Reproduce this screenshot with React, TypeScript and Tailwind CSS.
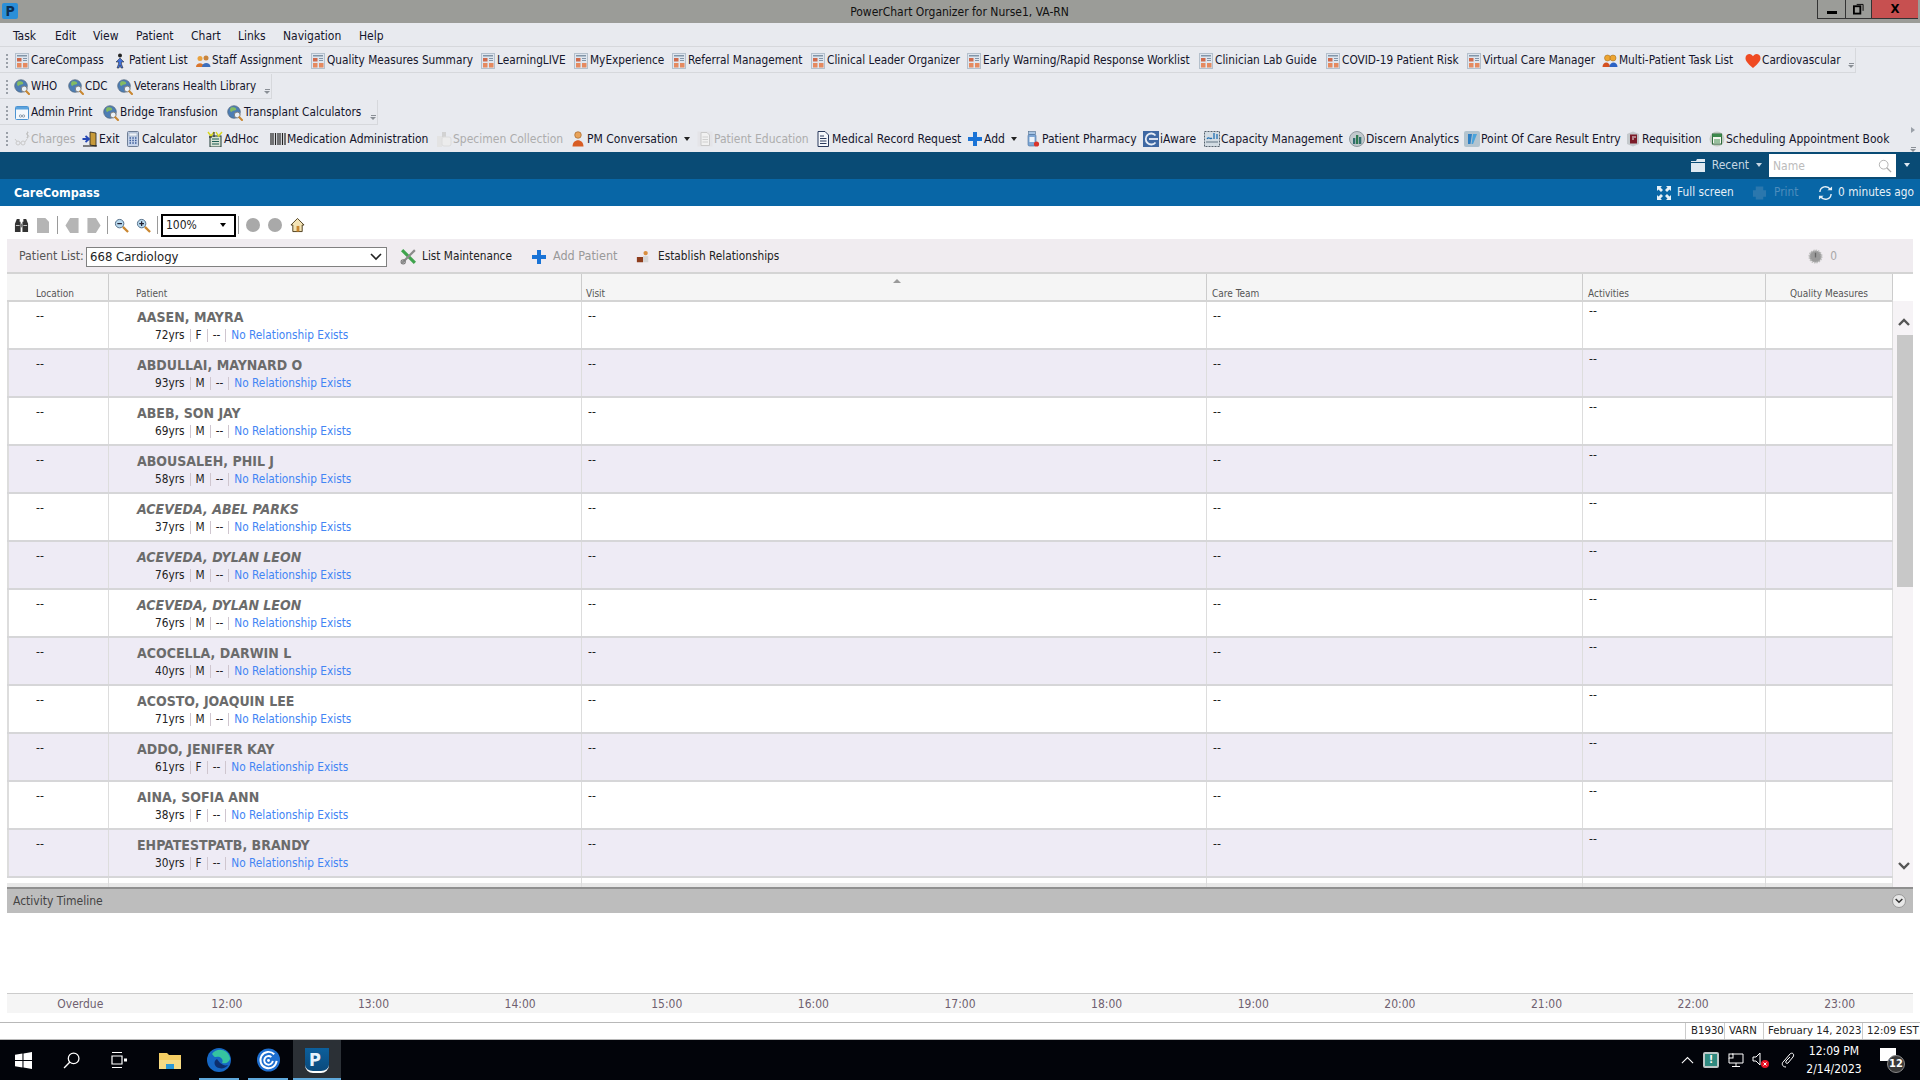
import type { ReactNode } from "react";

const Svg = ({ children, className = "w-4 h-4" }: { children: ReactNode; className?: string }) => (
  <svg viewBox="0 0 16 16" className={`flex-none ${className}`}>
    {children}
  </svg>
);

const icons: Record<string, ReactNode> = {
  report: (
    <Svg>
      <rect x="1.5" y="0.5" width="13" height="15" fill="#dfe6ef" stroke="#b4c0cc" />
      <rect x="3" y="2" width="10" height="1.5" fill="#8295a8" />
      <rect x="3" y="5" width="4.5" height="3.5" fill="#cf6a4c" />
      <rect x="9" y="5" width="4" height="1" fill="#8295a8" />
      <rect x="9" y="7" width="4" height="1" fill="#8295a8" />
      <rect x="3" y="10" width="4.5" height="4.5" fill="#e58a60" />
      <rect x="9" y="10" width="4.5" height="4.5" fill="#e58a60" />
    </Svg>
  ),
  person: (
    <Svg>
      <circle cx="8" cy="2.5" r="2" fill="#222" />
      <path d="M8 5 L12 9 L9.5 9 L9.5 11 L11 15 H9 L8 12 L7 15 H5 L6.5 11 V9 H4 Z" fill="#3f6fd8" stroke="#222" strokeWidth="0.5" />
    </Svg>
  ),
  staff: (
    <Svg>
      <circle cx="5" cy="5.5" r="2.5" fill="#e9a23f" />
      <path d="M1 14 C1 9 9 9 9 14 Z" fill="#d9752d" />
      <circle cx="11" cy="5" r="2.5" fill="#c9843c" />
      <path d="M7 14 C7 8.5 15.5 8.5 15.5 14 Z" fill="#3d6fbc" />
    </Svg>
  ),
  globe: (
    <Svg>
      <circle cx="7" cy="7" r="6.3" fill="#4d7db4" stroke="#51657a" strokeWidth="0.7" />
      <path d="M4 2.5 C7 1.5 10 3 9 5 C7 6 6 5 4.5 7 C3 7 2.5 4 4 2.5 Z" fill="#83bb62" />
      <circle cx="10.2" cy="10" r="2.9" fill="#e9f1f8" stroke="#777" strokeWidth="0.9" />
      <path d="M12.3 12.2 L15 15" stroke="#c9862f" strokeWidth="2" strokeLinecap="round" />
    </Svg>
  ),
  window: (
    <Svg>
      <rect x="1.5" y="1.5" width="13" height="13" rx="1" fill="#f4f8fc" stroke="#4b93d2" />
      <rect x="2" y="2" width="12" height="2.5" fill="#5ba3de" />
      <circle cx="6.5" cy="11" r="1.2" fill="none" stroke="#6a7d90" strokeWidth="0.7" />
      <circle cx="9.5" cy="11" r="1.2" fill="none" stroke="#6a7d90" strokeWidth="0.7" />
    </Svg>
  ),
  charges: (
    <Svg>
      <circle cx="4" cy="12" r="2" fill="none" stroke="#c9c9c9" />
      <circle cx="9" cy="12" r="2" fill="none" stroke="#c9c9c9" />
      <path d="M1 8 L3 10.5 M6 12 H7 M11 11 L13 8" stroke="#c9c9c9" />
      <path d="M14.5 1.5 C12 1 12 4 13.5 4 C15.5 4 15.5 7 12.5 6.5 M13.5 0.5 V7.5" stroke="#bdbdbd" strokeWidth="0.8" fill="none" />
    </Svg>
  ),
  exit: (
    <Svg>
      <path d="M8 1 L14 2 V15 L8 14 Z" fill="#c79a3a" stroke="#222" strokeWidth="0.8" />
      <path d="M0.5 8 H6 M3.5 5 L7 8 L3.5 11" stroke="#2447b5" strokeWidth="1.8" fill="none" />
      <path d="M1 15 H15" stroke="#111" />
    </Svg>
  ),
  calc: (
    <Svg>
      <rect x="2.5" y="0.5" width="11" height="15" rx="1" fill="#c6d4ea" stroke="#6f7f96" />
      <rect x="4" y="2" width="8" height="3" fill="#eef3f9" stroke="#7f90a8" strokeWidth="0.5" />
      <path d="M4.5 7 H6 M7.3 7 H8.8 M10 7 H11.5 M4.5 9.5 H6 M7.3 9.5 H8.8 M10 9.5 H11.5 M4.5 12 H6 M7.3 12 H8.8 M10 12 H11.5" stroke="#3d5d9b" strokeWidth="1.4" />
    </Svg>
  ),
  adhoc: (
    <Svg>
      <rect x="3" y="5" width="11" height="11" fill="#d8e2d4" stroke="#1f3a34" />
      <path d="M5 8 H12 M5 10.5 H12 M5 13 H12" stroke="#1f5f55" />
      <path d="M1 1 L4 5 L7 1 M9 1 L11.5 5 L15 1" stroke="#d8d81e" strokeWidth="1.4" fill="none" />
      <path d="M7 1 V6 M2 6 H5" stroke="#1a1a1a" />
    </Svg>
  ),
  barcode: (
    <Svg>
      <path d="M1 2 V14 M3 2 V14 M5.5 2 V14 M8 2 V14 M10 2 V14 M12.5 2 V14 M15 2 V14" stroke="#222" strokeWidth="1.2" />
    </Svg>
  ),
  jar: (
    <Svg>
      <rect x="1" y="5" width="5" height="11" fill="#e3e3e3" />
      <rect x="6" y="1" width="4" height="5" fill="#d2d2d2" />
      <rect x="6" y="6" width="9" height="9" rx="2" fill="#ececec" stroke="#dcdcdc" />
    </Svg>
  ),
  pm: (
    <Svg>
      <circle cx="8" cy="4" r="3.3" fill="#e8a35a" stroke="#9b5a1f" strokeWidth="0.6" />
      <path d="M2.5 15.5 C2.5 7 13.5 7 13.5 15.5 Z" fill="#d85d24" />
    </Svg>
  ),
  doc: (
    <Svg>
      <path d="M3 0.5 H10 L13.5 4 V15.5 H3 Z" fill="#f4f7fb" stroke="#2a3a5c" />
      <path d="M5 5 H9 M5 7.5 H11.5 M5 10 H11.5 M5 12.5 H11.5" stroke="#2a3a5c" />
    </Svg>
  ),
  docOff: (
    <Svg>
      <rect x="0.5" y="0.5" width="15" height="15" fill="#e4e4e8" />
      <path d="M4 1.5 H10 L12.5 4 V14.5 H4 Z" fill="#f1f1f1" stroke="#c9c9c9" />
      <path d="M5.5 6 H11 M5.5 8.5 H11 M5.5 11 H11" stroke="#cfcfcf" />
    </Svg>
  ),
  plus: (
    <Svg>
      <path d="M6 1 H10 V6 H15 V10 H10 V15 H6 V10 H1 V6 H6 Z" fill="#1a73d6" />
    </Svg>
  ),
  bottle: (
    <Svg>
      <rect x="3.5" y="0.5" width="7" height="3" fill="#a7c4e3" stroke="#52708f" strokeWidth="0.6" />
      <rect x="3" y="3.5" width="8" height="11.5" rx="1.5" fill="#7fa8d6" stroke="#456d9c" strokeWidth="0.6" />
      <rect x="4.5" y="6" width="5" height="5" fill="#eef4fa" />
      <circle cx="11.5" cy="13" r="2.6" fill="#d9342b" />
    </Svg>
  ),
  iaware: (
    <Svg>
      <rect width="16" height="16" fill="#3e68a3" />
      <path d="M12.5 4.5 A5.5 5.5 0 1 0 12.5 11.5" stroke="#e7edf5" strokeWidth="1.8" fill="none" />
      <path d="M6 8 H15" stroke="#e7edf5" strokeWidth="1.8" />
    </Svg>
  ),
  capacity: (
    <Svg>
      <rect x="0.5" y="0.5" width="15" height="15" fill="#d3dce3" stroke="#56636e" strokeDasharray="2 1" />
      <path d="M3 8 C5 5 6 9 8 7 M10 2 V8 M13 3 V8" stroke="#1f6fb3" strokeWidth="1.3" fill="none" />
      <path d="M2 11 H14" stroke="#9aa8b3" strokeWidth="2" />
    </Svg>
  ),
  discern: (
    <Svg>
      <circle cx="8" cy="8" r="7.5" fill="#c2c9cd" stroke="#8f999f" />
      <rect x="4" y="7" width="2.3" height="6" fill="#2f6d6f" />
      <rect x="7" y="4" width="2.3" height="9" fill="#2f7a50" />
      <rect x="10" y="6" width="2.3" height="7" fill="#2f6d6f" />
    </Svg>
  ),
  poc: (
    <Svg>
      <rect width="16" height="16" rx="2" fill="#b3c4cf" />
      <path d="M4 3 H8 L6.5 13 H4 Z" fill="#2d7fc4" />
      <path d="M9 3 H13 L9 13 H7.5 Z" fill="#4aa3dc" />
    </Svg>
  ),
  req: (
    <Svg>
      <path d="M8 0.5 L14 3 V13 L8 15.5 L2 13 V3 Z" fill="#c4c9cc" />
      <rect x="5" y="3.5" width="7" height="9" fill="#7c1b28" />
      <path d="M7 6 H11 M7 8 H9" stroke="#eee" />
    </Svg>
  ),
  sched: (
    <Svg>
      <circle cx="8" cy="8" r="7.5" fill="#c3cbc3" />
      <rect x="3.5" y="3" width="9" height="10" fill="#f3f6ee" stroke="#2e6b3d" />
      <rect x="3.5" y="3" width="9" height="3" fill="#3d8a4c" />
      <path d="M5 9 H11 M5 11 H11" stroke="#3d8a4c" />
    </Svg>
  ),
  heart: (
    <Svg>
      <path d="M8 15 C2 10 0.5 7.5 0.5 5 C0.5 2.5 2.5 1 4.5 1 C6 1 7.3 2 8 3.3 C8.7 2 10 1 11.5 1 C13.5 1 15.5 2.5 15.5 5 C15.5 7.5 14 10 8 15 Z" fill="#ef4a22" />
    </Svg>
  ),
  multi: (
    <Svg>
      <circle cx="5.5" cy="5" r="3" fill="#eda531" stroke="#9a6213" strokeWidth="0.5" />
      <circle cx="11" cy="5" r="3" fill="#eda531" stroke="#9a6213" strokeWidth="0.5" />
      <path d="M0.5 14 C0.5 8 8 8 8 14 Z" fill="#d4501f" />
      <path d="M7.5 14 C7.5 8 15.5 8 15.5 14 Z" fill="#2c62c4" />
    </Svg>
  ),
};

type Tool = { icon: string; label: string; w: string; off?: boolean; arrow?: boolean };

const row1: Tool[] = [
  { icon: "report", label: "CareCompass", w: "w-[98px]" },
  { icon: "person", label: "Patient List", w: "w-[83px]" },
  { icon: "staff", label: "Staff Assignment", w: "w-[115px]" },
  { icon: "report", label: "Quality Measures Summary", w: "w-[170px]" },
  { icon: "report", label: "LearningLIVE", w: "w-[93px]" },
  { icon: "report", label: "MyExperience", w: "w-[98px]" },
  { icon: "report", label: "Referral Management", w: "w-[139px]" },
  { icon: "report", label: "Clinical Leader Organizer", w: "w-[156px]" },
  { icon: "report", label: "Early Warning/Rapid Response Worklist", w: "w-[232px]" },
  { icon: "report", label: "Clinician Lab Guide", w: "w-[127px]" },
  { icon: "report", label: "COVID-19 Patient Risk", w: "w-[141px]" },
  { icon: "report", label: "Virtual Care Manager", w: "w-[136px]" },
  { icon: "multi", label: "Multi-Patient Task List", w: "w-[143px]" },
  { icon: "heart", label: "Cardiovascular", w: "w-[103px]" },
];

const row2: Tool[] = [
  { icon: "globe", label: "WHO", w: "w-[54px]" },
  { icon: "globe", label: "CDC", w: "w-[49px]" },
  { icon: "globe", label: "Veterans Health Library", w: "w-[147px]" },
];

const row3: Tool[] = [
  { icon: "window", label: "Admin Print", w: "w-[89px]" },
  { icon: "globe", label: "Bridge Transfusion", w: "w-[124px]" },
  { icon: "globe", label: "Transplant Calculators", w: "w-[143px]" },
];

const row4: Tool[] = [
  { icon: "charges", label: "Charges", w: "w-[68px]", off: true },
  { icon: "exit", label: "Exit", w: "w-[43px]" },
  { icon: "calc", label: "Calculator", w: "w-[82px]" },
  { icon: "adhoc", label: "AdHoc", w: "w-[63px]" },
  { icon: "barcode", label: "Medication Administration", w: "w-[166px]" },
  { icon: "jar", label: "Specimen Collection", w: "w-[134px]", off: true },
  { icon: "pm", label: "PM Conversation", w: "w-[127px]", arrow: true },
  { icon: "docOff", label: "Patient Education", w: "w-[118px]", off: true },
  { icon: "doc", label: "Medical Record Request", w: "w-[152px]" },
  { icon: "plus", label: "Add", w: "w-[58px]", arrow: true },
  { icon: "bottle", label: "Patient Pharmacy", w: "w-[118px]" },
  { icon: "iaware", label: "iAware", w: "w-[61px]" },
  { icon: "capacity", label: "Capacity Management", w: "w-[145px]" },
  { icon: "discern", label: "Discern Analytics", w: "w-[115px]" },
  { icon: "poc", label: "Point Of Care Result Entry", w: "w-[161px]" },
  { icon: "req", label: "Requisition", w: "w-[84px]" },
  { icon: "sched", label: "Scheduling Appointment Book", w: "w-[165px]" },
];

const patients = [
  { name: "AASEN, MAYRA", age: "72yrs", sex: "F" },
  { name: "ABDULLAI, MAYNARD O", age: "93yrs", sex: "M" },
  { name: "ABEB, SON JAY", age: "69yrs", sex: "M" },
  { name: "ABOUSALEH, PHIL J", age: "58yrs", sex: "M" },
  { name: "ACEVEDA, ABEL PARKS", age: "37yrs", sex: "M", italic: true },
  { name: "ACEVEDA, DYLAN LEON", age: "76yrs", sex: "M", italic: true },
  { name: "ACEVEDA, DYLAN LEON", age: "76yrs", sex: "M", italic: true },
  { name: "ACOCELLA, DARWIN L", age: "40yrs", sex: "M" },
  { name: "ACOSTO, JOAQUIN LEE", age: "71yrs", sex: "M" },
  { name: "ADDO, JENIFER KAY", age: "61yrs", sex: "F" },
  { name: "AINA, SOFIA ANN", age: "38yrs", sex: "F" },
  { name: "EHPATESTPATB, BRANDY", age: "30yrs", sex: "F" },
];

const hours = ["Overdue", "12:00", "13:00", "14:00", "15:00", "16:00", "17:00", "18:00", "19:00", "20:00", "21:00", "22:00", "23:00"];

const cols = "grid grid-cols-[102px_473px_625px_376px_183px_127px]";

const Grip = () => (
  <div className="flex-none w-[2px] h-[15px] ml-[6px] mr-[6px] bg-[repeating-linear-gradient(to_bottom,#9aa0a8_0px,#9aa0a8_2px,transparent_2px,transparent_4px)]" />
);

const Overflow = ({ className = "" }: { className?: string }) => (
  <div className={`flex flex-col items-center gap-[1px] mt-[8px] ${className}`}>
    <div className="w-[5px] h-px bg-[#8a8f96]" />
    <div className="w-0 h-0 border-x-[3px] border-x-transparent border-t-[3px] border-t-[#8a8f96]" />
  </div>
);

const Caret = ({ className = "border-t-[#222]" }: { className?: string }) => (
  <div className={`flex-none w-0 h-0 border-x-[3px] border-x-transparent border-t-[4px] ${className}`} />
);

function ToolItem({ t }: { t: Tool }) {
  return (
    <div className={`flex-none flex items-center ${t.w}`}>
      <div className="flex-none w-[17px]">{icons[t.icon]}</div>
      <span className={`whitespace-nowrap ${t.off ? "text-[#adadad]" : "text-[#15152b]"}`}>{t.label}</span>
      {t.arrow && <Caret className="border-t-[#222] ml-[6px]" />}
    </div>
  );
}

function ToolRow({ items, wrap, extra }: { items: Tool[]; wrap: string; extra?: ReactNode }) {
  return (
    <div className={`flex items-center h-[25px] pt-[2px] border-b border-[#d6d8dc] ${wrap}`}>
      <Grip />
      {items.map((t, i) => (
        <ToolItem key={t.label + i} t={t} />
      ))}
      {extra}
    </div>
  );
}

const Sep = () => <div className="w-px h-[13px] bg-[#cfc6cf] mx-[5px]" />;
const BarSep = () => <div className="flex-none w-px h-[18px] bg-[#9a9a9a]" />;

function PatientRow({ p, even }: { p: (typeof patients)[number]; even: boolean }) {
  return (
    <div className={`${cols} h-[48px] border-b-2 border-[#d6d6d8] ${even ? "bg-[#eeebf5]" : "bg-white"}`}>
      <div className="border-l-2 border-r border-[#dddddd] pl-[27px] pt-[6px] text-[12px] leading-4 text-[#222]">--</div>
      <div className="border-r border-[#dddddd] pl-[28px] pt-[6px]">
        <div className={`h-[18px] text-[14px] leading-[18px] font-bold text-[#6b6b6b] whitespace-nowrap ${p.italic ? "italic" : ""}`}>{p.name}</div>
        <div className="flex items-center h-[16px] mt-px pl-[18px] text-[11.75px] leading-4 text-[#222]">
          <span>{p.age}</span>
          <Sep />
          <span>{p.sex}</span>
          <Sep />
          <span>--</span>
          <Sep />
          <span className="text-[#4285f4] whitespace-nowrap">No Relationship Exists</span>
        </div>
      </div>
      <div className="border-r border-[#dddddd] pl-[6px] pt-[6px] text-[12px] leading-4 text-[#222]">--</div>
      <div className="border-r border-[#dddddd] pl-[6px] pt-[6px] text-[12px] leading-4 text-[#222]">--</div>
      <div className="border-r border-[#dddddd] pl-[6px] pt-[1px] text-[12px] leading-4 text-[#222]">--</div>
      <div className="border-r border-[#dddddd]" />
    </div>
  );
}

export default function App() {
  return (
    <div className="w-[1920px] h-[1080px] overflow-hidden flex flex-col bg-white text-[11.75px] font-['DejaVu_Sans'] [font-stretch:condensed]">
      {/* title bar */}
      <div className="flex-none h-[23px] bg-[#9b9c98] flex items-start">
        <div className="flex-none w-[16px] h-[16px] mt-[3px] ml-[2px] bg-[#2b8fd8] rounded-[2px] flex items-center justify-center text-[14px] leading-none font-bold text-[#0b2e52]">P</div>
        <div className="flex-1 text-center text-[12px] leading-[24px] text-[#111] pl-[84px]">PowerChart Organizer for Nurse1, VA-RN</div>
        <div className="flex-none flex h-[19px] mr-[2px] border-b border-l border-[#333]">
          <div className="w-[28px] border-r border-[#333] flex items-end justify-center pb-[4px]">
            <div className="w-[10px] h-[3px] bg-black" />
          </div>
          <div className="w-[26px] border-r border-[#333] flex items-center justify-center">
            <svg viewBox="0 0 12 12" className="w-[11px] h-[12px]">
              <rect x="1" y="3" width="7" height="8" fill="none" stroke="#000" strokeWidth="2" />
              <path d="M4 1 H11 V8" fill="none" stroke="#000" />
            </svg>
          </div>
          <div className="w-[46px] bg-[#c75050] text-center text-[13px] leading-[18px] font-bold text-black">X</div>
        </div>
      </div>

      {/* menu + toolbars */}
      <div className="flex-none h-[129px] bg-[#e8eaef]">
        <div className="flex items-center h-[24px] pl-[13px] pt-[2px] border-b border-[#d6d8dc] text-[12px] text-[#15152b]">
          <span className="w-[42px]">Task</span>
          <span className="w-[38px]">Edit</span>
          <span className="w-[43px]">View</span>
          <span className="w-[55px]">Patient</span>
          <span className="w-[47px]">Chart</span>
          <span className="w-[45px]">Links</span>
          <span className="w-[76px]">Navigation</span>
          <span>Help</span>
        </div>
        <div className="h-px" />
        <ToolRow items={row1} wrap="w-[1856px] border-r" extra={<Overflow />} />
        <div className="h-px" />
        <ToolRow items={row2} wrap="w-[272px] border-r text-[11.5px]" extra={<Overflow />} />
        <div className="h-px" />
        <ToolRow items={row3} wrap="w-[378px] border-r" extra={<Overflow />} />
        <div className="h-px" />
        <div className="flex items-center h-[26px] text-[12px]">
          <Grip />
          {row4.map((t) => (
            <ToolItem key={t.label} t={t} />
          ))}
          <div className="ml-auto mr-[4px] flex flex-col items-center gap-[6px]">
            <div className="w-0 h-0 border-y-[3px] border-y-transparent border-l-[4px] border-l-[#9aa0a8]" />
            <Overflow className="mt-0" />
          </div>
        </div>
      </div>

      {/* dark header */}
      <div className="flex-none h-[27px] bg-[#094b75] flex items-center justify-end text-[12px] text-[#c6d7e4]">
        <svg viewBox="0 0 16 16" className="w-[16px] h-[16px] mr-[6px] mb-[1px]">
          <path d="M1 4 H6 L7 2 H15 V15 H1 Z" fill="#dfe9f1" />
          <path d="M1 5.5 H15" stroke="#094b75" />
        </svg>
        <span className="mb-[2px]">Recent</span>
        <Caret className="border-t-[#c6d7e4] ml-[7px] mr-[7px] mb-[2px]" />
        <div className="w-[127px] h-[23px] bg-white flex items-center justify-between pl-[4px] pr-[4px] text-[#bbbbbb]">
          <span>Name</span>
          <svg viewBox="0 0 16 16" className="w-[14px] h-[14px]">
            <circle cx="6.5" cy="6.5" r="5" fill="none" stroke="#aaa" />
            <path d="M10 10 L15 15" stroke="#aaa" strokeWidth="1.5" />
          </svg>
        </div>
        <Caret className="border-t-[#dfe9f1] ml-[8px] mr-[10px] mb-[2px]" />
      </div>

      {/* care compass header */}
      <div className="flex-none h-[27px] bg-[#0866a6] flex items-center pl-[14px] pr-[6px] pt-[1px] text-[11.75px] text-[#e6f0f7]">
        <span className="text-[12.5px] font-bold text-white">CareCompass</span>
        <svg viewBox="0 0 16 16" className="w-[16px] h-[16px] ml-auto mr-[5px]">
          <path d="M1 1 H6 L4.5 2.5 L7 5 L5 7 L2.5 4.5 L1 6 Z M15 1 V6 L13.5 4.5 L11 7 L9 5 L11.5 2.5 L10 1 Z M1 15 V10 L2.5 11.5 L5 9 L7 11 L4.5 13.5 L6 15 Z M15 15 H10 L11.5 13.5 L9 11 L11 9 L13.5 11.5 L15 10 Z" fill="#e6f0f7" />
        </svg>
        <span className="w-[75px]">Full screen</span>
        <svg viewBox="0 0 16 16" className="w-[15px] h-[16px] mr-[7px]">
          <path d="M4 1 H12 V5 H15 V12 H12 V15 H4 V12 H1 V5 H4 Z" fill="#2b77ad" />
        </svg>
        <span className="w-[44px] text-[#4d8dbd]">Print</span>
        <svg viewBox="0 0 16 16" className="w-[15px] h-[16px] mr-[5px]">
          <path d="M13 4 A6 6 0 0 0 2 7 M3 12 A6 6 0 0 0 14 9" fill="none" stroke="#e6f0f7" strokeWidth="1.5" />
          <path d="M10 5 H15 V1 Z M1 11 H6 L1 15 Z" fill="#e6f0f7" />
        </svg>
        <span className="whitespace-nowrap">0 minutes ago</span>
      </div>

      {/* zoom toolbar */}
      <div className="flex-none h-[33px] flex items-center pl-[14px] pt-[5px]">
        <svg viewBox="0 0 16 16" className="w-[15px] h-[15px] mr-[8px]">
          <path d="M3 1 H6 V4 H7 V15 H1 V6 Z M10 1 H13 L15 6 V15 H9 V4 H10 Z" fill="#333" />
          <path d="M7 6 H9 V10 H7 Z" fill="#777" />
          <path d="M2 8 H6 M10 8 H14" stroke="#ccc" />
        </svg>
        <svg viewBox="0 0 13 16" className="w-[12px] h-[15px] mr-[8px]">
          <path d="M0 0 H9 L13 4 V16 H0 Z" fill="#b5b5b5" />
        </svg>
        <BarSep />
        <svg viewBox="0 0 14 16" className="w-[14px] h-[15px] ml-[7px] mr-[8px]">
          <path d="M5 0 H14 V16 H5 L0 8 Z" fill="#b5b5b5" />
        </svg>
        <svg viewBox="0 0 14 16" className="w-[14px] h-[15px] mr-[6px]">
          <path d="M0 0 H9 L14 8 L9 16 H0 Z" fill="#b5b5b5" />
        </svg>
        <BarSep />
        <svg viewBox="0 0 16 16" className="w-[15px] h-[15px] ml-[6px] mr-[7px]">
          <circle cx="6" cy="6" r="4.5" fill="#b9d9ee" stroke="#4f6b85" />
          <path d="M3.5 6 H8.5" stroke="#223" strokeWidth="1.3" />
          <path d="M9.5 9.5 L15 15" stroke="#c9862f" strokeWidth="2.4" />
        </svg>
        <svg viewBox="0 0 16 16" className="w-[15px] h-[15px] mr-[6px]">
          <circle cx="6" cy="6" r="4.5" fill="#b9d9ee" stroke="#4f6b85" />
          <path d="M3.5 6 H8.5 M6 3.5 V8.5" stroke="#223" strokeWidth="1.3" />
          <path d="M9.5 9.5 L15 15" stroke="#c9862f" strokeWidth="2.4" />
        </svg>
        <BarSep />
        <div className="w-[75px] h-[23px] ml-[3px] mr-[2px] border-2 border-black flex items-center justify-between pl-[3px] pr-[8px] text-[12px] text-[#222]">
          <span>100%</span>
          <Caret className="border-t-black" />
        </div>
        <BarSep />
        <div className="w-[14px] h-[14px] rounded-full bg-[#a9a9a9] ml-[7px] mr-[8px]" />
        <div className="w-[14px] h-[14px] rounded-full bg-[#a9a9a9] mr-[8px]" />
        <svg viewBox="0 0 16 16" className="w-[15px] h-[16px]">
          <path d="M8 1 L15 8 H13 V15 H3 V8 H1 Z" fill="#f3e3b5" stroke="#4a3a1a" />
          <rect x="7" y="9" width="3" height="6" fill="#c9862f" />
        </svg>
      </div>

      {/* main panel */}
      <div className="flex-none mx-[7px] w-[1906px] flex flex-col">
        <div className="h-[35px] bg-[#f0ecf0] border-b-2 border-[#d4d4d4] flex items-center pl-[12px] pt-[2px] text-[11.75px] text-[#222]">
          <span className="w-[67px] text-[12.25px] text-[#555555] whitespace-nowrap">Patient List:</span>
          <div className="flex-none w-[301px] h-[20px] bg-white border border-[#808080] flex items-center justify-between pl-[3px] pr-[4px] text-[13px]">
            <span>668 Cardiology</span>
            <svg viewBox="0 0 12 8" className="w-[12px] h-[8px]">
              <path d="M1 1 L6 6 L11 1" fill="none" stroke="#222" strokeWidth="1.6" />
            </svg>
          </div>
          <svg viewBox="0 0 16 16" className="w-[17px] h-[17px] ml-[13px] mr-[5px]">
            <path d="M2 2 L14 14" stroke="#3fa34d" strokeWidth="3" />
            <path d="M14 2 L2 14" stroke="#8b8b8b" strokeWidth="2" />
            <circle cx="3" cy="13" r="2" fill="none" stroke="#777" />
          </svg>
          <span className="w-[109px] whitespace-nowrap">List Maintenance</span>
          <div className="flex-none w-[15px] mr-[7px]">{icons.plus}</div>
          <span className="w-[83px] text-[12.5px] text-[#999999] whitespace-nowrap">Add Patient</span>
          <svg viewBox="0 0 16 16" className="w-[14px] h-[16px] mr-[8px]">
            <circle cx="11" cy="3.5" r="2.5" fill="#d98e3f" />
            <path d="M8 14 V7 H14 V14 Z" fill="#d6d6d6" />
            <rect x="1" y="8" width="7" height="6" fill="#8e3d1d" />
          </svg>
          <span className="whitespace-nowrap">Establish Relationships</span>
          <div className="ml-auto mr-[76px] flex items-center gap-[7px] text-[#a8a8a8]">
            <svg viewBox="0 0 16 16" className="w-[15px] h-[15px]">
              <circle cx="8" cy="8" r="6.5" fill="#9a9a9a" stroke="#bdbdbd" strokeWidth="2" strokeDasharray="1.5 1" />
              <path d="M8 4 V9" stroke="#666" strokeWidth="1.4" />
            </svg>
            <span>0</span>
          </div>
        </div>

        <div className="flex">
          <div className="flex-none w-[1886px] flex flex-col">
            <div className={`${cols} h-[28px] bg-[#f5f5f5] border-b-2 border-[#d4d4d4] text-[10px] leading-3 text-[#555555]`}>
              <div className="border-r border-[#cccccc] pl-[29px] pt-[14px]">Location</div>
              <div className="border-r border-[#cccccc] pl-[27px] pt-[14px]">Patient</div>
              <div className="border-r border-[#cccccc] pl-[4px] pt-[14px] flex flex-col">
                <div className="relative">
                  Visit
                  <div className="absolute left-[307px] top-[-9px] w-0 h-0 border-x-[4px] border-x-transparent border-b-[4px] border-b-[#9a9a9a]" />
                </div>
              </div>
              <div className="border-r border-[#cccccc] pl-[5px] pt-[14px]">Care Team</div>
              <div className="border-r border-[#cccccc] pl-[5px] pt-[14px]">Activities</div>
              <div className="border-r border-[#cccccc] pl-[24px] pt-[14px] whitespace-nowrap">Quality Measures</div>
            </div>
            {patients.map((p, i) => (
              <PatientRow key={p.name + i} p={p} even={i % 2 === 1} />
            ))}
            <div className={`${cols} h-[9px] bg-gradient-to-b from-white from-50% to-[#e8e8e8] to-50%`}>
              <div className="border-r border-[#dddddd]" />
              <div className="border-r border-[#dddddd]" />
              <div className="border-r border-[#dddddd]" />
              <div className="border-r border-[#dddddd]" />
              <div className="border-r border-[#dddddd]" />
              <div className="border-r border-[#dddddd]" />
            </div>
          </div>

          {/* scrollbar */}
          <div className="flex-none w-[20px] mt-[27px] h-[586px] bg-[#f6f3f6] flex flex-col items-end">
            <svg viewBox="0 0 12 8" className="w-[12px] h-[8px] mt-[17px] mr-[3px]">
              <path d="M1 7 L6 2 L11 7" fill="none" stroke="#555" strokeWidth="2.4" />
            </svg>
            <div className="w-[16px] h-[252px] bg-[#c8c8c8] mt-[9px]" />
            <svg viewBox="0 0 12 8" className="w-[12px] h-[8px] mt-auto mb-[17px] mr-[3px]">
              <path d="M1 1 L6 6 L11 1" fill="none" stroke="#555" strokeWidth="2.4" />
            </svg>
          </div>
        </div>

        <div className="h-[26px] bg-[#bdbdbd] border-t-2 border-[#8f8f8f] flex items-center justify-between pl-[6px] pr-[7px] text-[12px] text-[#444444]">
          <span>Activity Timeline</span>
          <div className="w-[14px] h-[14px] rounded-full bg-[#e8e8e8] border border-[#999] flex items-center justify-center">
            <svg viewBox="0 0 12 8" className="w-[8px] h-[6px]">
              <path d="M1 1 L6 6 L11 1" fill="none" stroke="#333" strokeWidth="2.2" />
            </svg>
          </div>
        </div>

        <div className="h-[80px] bg-white" />

        <div className="h-[20px] bg-[#f5f5f5] border-t border-[#cccccc] grid grid-cols-13 items-center text-center text-[12px] text-[#6f5f6f]">
          {hours.map((h) => (
            <span key={h}>{h}</span>
          ))}
        </div>
      </div>

      {/* status bar */}
      <div className="flex-none mt-[9px] h-[18px] bg-white border-y border-[#b8b8b8] flex items-center justify-end pr-[2px] text-[11.3px] leading-4 text-[#222]">
        <span className="w-[39px] pl-[5px] border-l border-[#cccccc] whitespace-nowrap">B1930</span>
        <span className="w-[39px] pl-[4px] border-l border-[#cccccc] whitespace-nowrap">VARN</span>
        <span className="w-[99px] pl-[4px] border-l border-[#cccccc] whitespace-nowrap">February 14, 2023</span>
        <span className="w-[56px] pl-[4px] border-l border-[#cccccc] whitespace-nowrap">12:09 EST</span>
      </div>

      {/* taskbar */}
      <div className="flex-none h-[40px] bg-[#02040a] flex items-center">
        <svg viewBox="0 0 16 16" className="w-[17px] h-[17px] ml-[15px]">
          <path d="M0 2.5 L7 1.5 V7.5 H0 Z M8 1.3 L16 0 V7.5 H8 Z M0 8.5 H7 V14.5 L0 13.5 Z M8 8.5 H16 V16 L8 14.7 Z" fill="#fff" />
        </svg>
        <svg viewBox="0 0 16 16" className="w-[17px] h-[17px] ml-[31px]">
          <circle cx="10" cy="6" r="5" fill="none" stroke="#fff" strokeWidth="1.2" />
          <path d="M6.5 9.5 L1 15" stroke="#fff" strokeWidth="1.3" />
        </svg>
        <svg viewBox="0 0 16 16" className="w-[16px] h-[16px] ml-[31px]">
          <path d="M1 0.5 H11 M1 15.5 H11 M1 4 H11 V12 H1 Z" fill="none" stroke="#fff" strokeWidth="1.2" />
          <rect x="13" y="6.5" width="3" height="3" fill="#fff" />
        </svg>
        <svg viewBox="0 0 22 18" className="w-[22px] h-[18px] ml-[32px]">
          <path d="M0 2 H8 L10 4 H22 V18 H0 Z" fill="#f4cd63" />
          <path d="M0 9 H22 V18 H15 V13 H7 V18 H0 Z" fill="#f8dc85" />
          <rect x="7" y="13" width="8" height="5" fill="#2e9ad8" />
        </svg>
        <div className="relative ml-[18px] w-[40px] h-[40px] flex items-center justify-center">
          <svg viewBox="0 0 24 24" className="w-[24px] h-[24px]">
            <circle cx="12" cy="12" r="12" fill="#1667c4" />
            <path d="M5 6 C10 -1 21 1 23 10 C23 14 19 16 15 15 C17 12 14 8 9 9 C7 9.5 6 7 5 6 Z" fill="#35c3a0" />
            <path d="M12 20 C7 19 6 13 10 11 C12 14 16 19 21 17 C19 20 15 21 12 20 Z" fill="#0d2f6e" />
          </svg>
          <div className="absolute bottom-0 inset-x-0 h-[2px] bg-[#5fa9dc]" />
        </div>
        <div className="relative w-[40px] h-[40px] ml-[9px] flex items-center justify-center">
          <svg viewBox="0 0 24 24" className="w-[23px] h-[24px]">
            <circle cx="12" cy="12" r="12" fill="#1e6fd0" />
            <path d="M18 6 A8.5 8.5 0 1 0 20.5 13 M15 9 A4.5 4.5 0 1 0 16.5 13" fill="none" stroke="#fff" strokeWidth="2" />
            <circle cx="12" cy="12.5" r="1.5" fill="#fff" />
          </svg>
          <div className="absolute bottom-0 inset-x-0 h-[2px] bg-[#5fa9dc]" />
        </div>
        <div className="relative w-[48px] h-[40px] ml-[5px] bg-[#2b3036] flex items-center justify-center">
          <div className="w-[24px] h-[25px] bg-gradient-to-b from-[#0c5f9c] to-[#0a4a7c] rounded-b-lg border-b-2 border-white text-[18px] leading-[23px] font-bold text-[#e7f2fb] pl-[4px]">P</div>
          <div className="absolute bottom-0 inset-x-0 h-[2px] bg-[#5fa9dc]" />
        </div>

        <div className="ml-auto flex items-center text-white text-[12px]">
          <svg viewBox="0 0 16 10" className="w-[13px] h-[8px] mr-[9px]">
            <path d="M1 9 L8 2 L15 9" fill="none" stroke="#fff" strokeWidth="1.3" />
          </svg>
          <div className="w-[16px] h-[16px] rounded-[2px] bg-[#2f8a80] border-2 border-[#bcc7c7] text-center text-[10px] leading-3 font-bold mr-[9px]">!</div>
          <svg viewBox="0 0 16 16" className="w-[16px] h-[16px] mr-[8px]">
            <path d="M4 2 H15 V11 H1 V6 M8 11 V14 M4 14.5 H12" fill="none" stroke="#fff" />
            <rect x="1" y="2" width="4" height="4" fill="none" stroke="#fff" />
          </svg>
          <svg viewBox="0 0 18 16" className="w-[18px] h-[16px] mr-[10px]">
            <path d="M1 5 H4 L8 1 V13 L4 9 H1 Z" fill="none" stroke="#fff" />
            <circle cx="13" cy="12" r="4" fill="#e81123" />
            <path d="M11.5 10.5 L14.5 13.5 M14.5 10.5 L11.5 13.5" stroke="#fff" />
          </svg>
          <svg viewBox="0 0 16 16" className="w-[16px] h-[16px] mr-[8px]">
            <path d="M6 15 C2 15 1 11 4 9 L10 2 C12 0 15 2 13 5 L8 11 C7 12 5 11 6 9 L10 5" fill="none" stroke="#fff" />
          </svg>
          <div className="w-[60px] flex flex-col items-center leading-[18px] whitespace-nowrap">
            <span>12:09 PM</span>
            <span>2/14/2023</span>
          </div>
          <div className="relative w-[26px] h-[26px] ml-[15px] mr-[15px]">
            <div className="w-[16px] h-[13px] bg-white ml-[1px] mt-[1px]" />
            <div className="absolute right-0 bottom-0 w-[18px] h-[18px] rounded-full bg-[#3a3a3a] border border-[#888] text-center text-[11px] leading-4 font-bold text-white">12</div>
          </div>
        </div>
      </div>
    </div>
  );
}
